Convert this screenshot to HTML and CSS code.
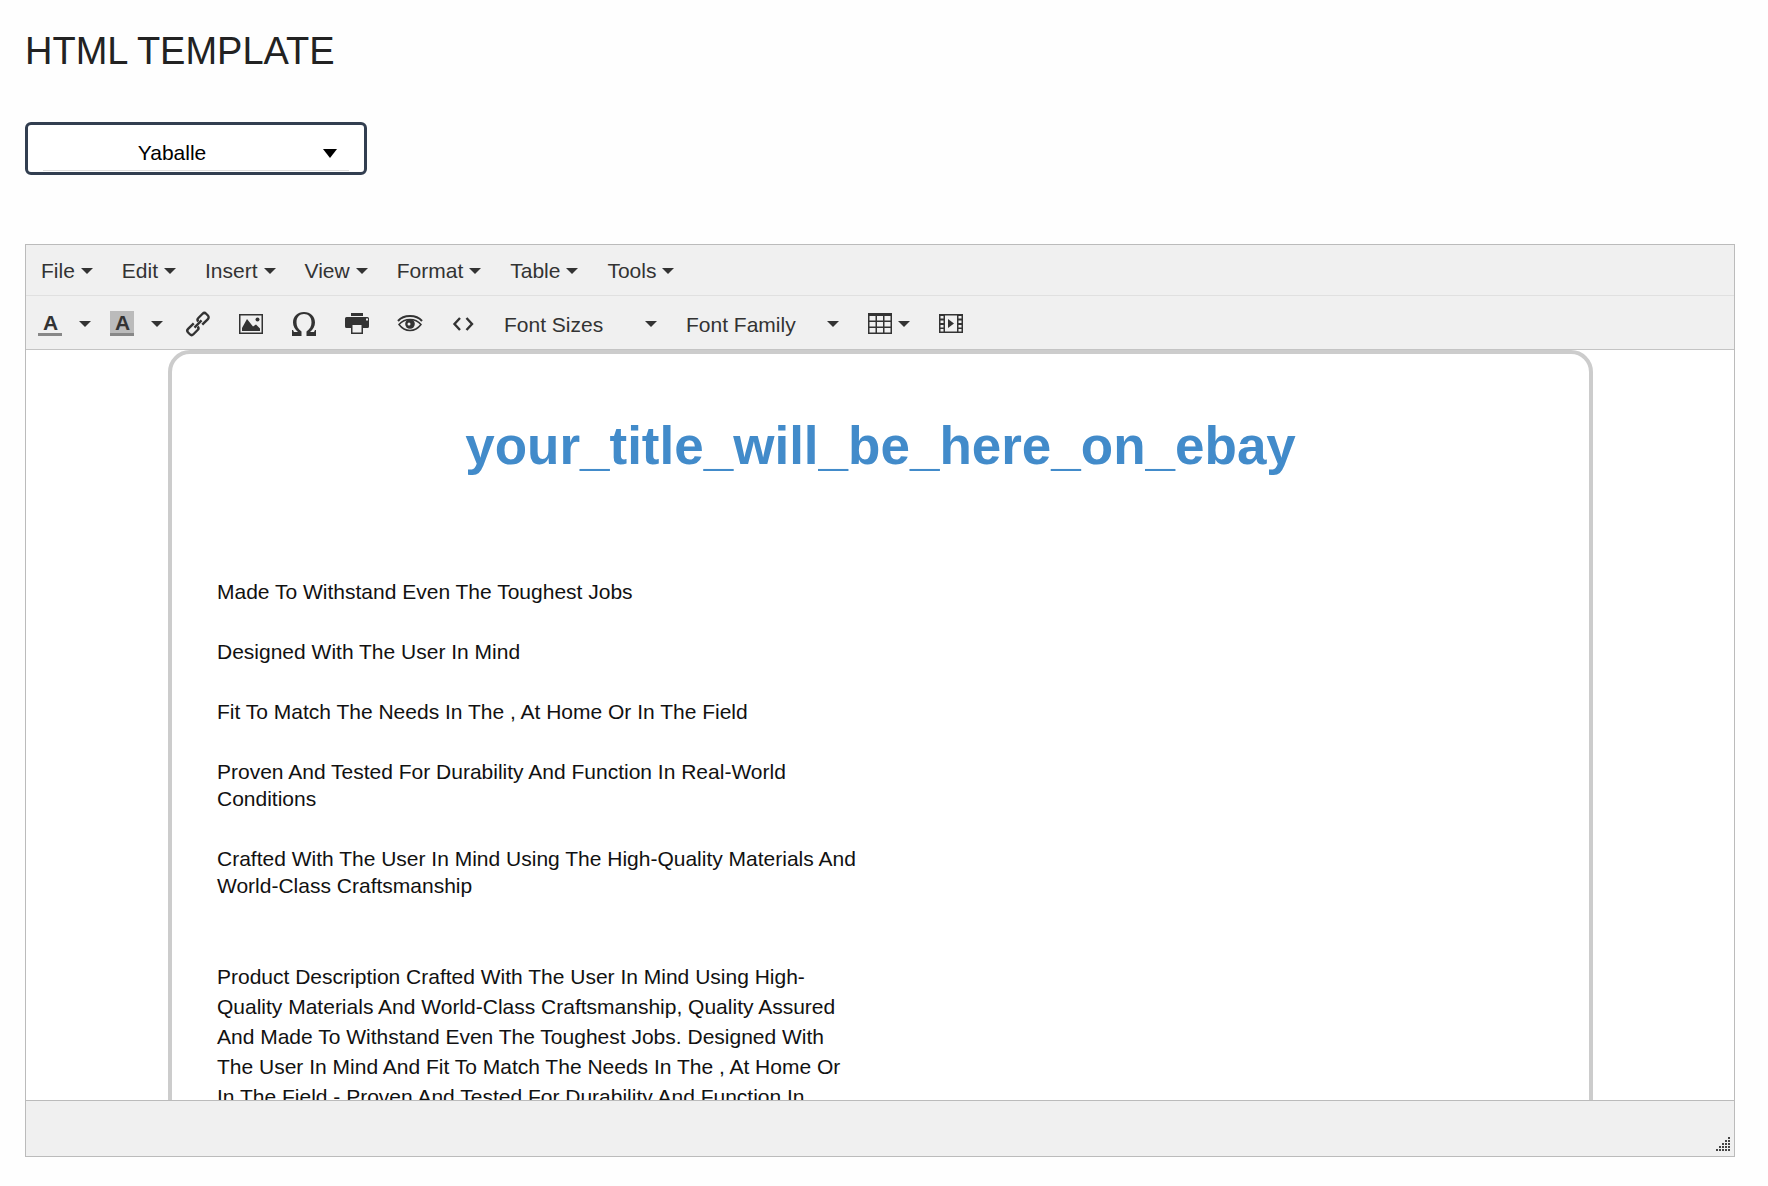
FILE: index.html
```html
<!DOCTYPE html>
<html lang="en">
<head>
  <meta charset="UTF-8">
  <meta name="viewport" content="width=device-width, initial-scale=1.0">
  <title>HTML Template</title>
  <link rel="stylesheet" href="styles.css">
</head>
<body>

  <h1 class="page-title">HTML TEMPLATE</h1>

  <div class="template-picker">
    <select class="template-select" aria-label="Template">
      <option>Yaballe</option>
    </select>
    <svg class="picker-caret" viewBox="0 0 14 9"><path d="M0 0h14L7 9z"/></svg>
  </div>

  <div class="editor">
    <div class="menubar">
      <button type="button" class="menu-btn">File <i class="caret"></i></button>
      <button type="button" class="menu-btn">Edit <i class="caret"></i></button>
      <button type="button" class="menu-btn">Insert <i class="caret"></i></button>
      <button type="button" class="menu-btn">View <i class="caret"></i></button>
      <button type="button" class="menu-btn">Format <i class="caret"></i></button>
      <button type="button" class="menu-btn">Table <i class="caret"></i></button>
      <button type="button" class="menu-btn">Tools <i class="caret"></i></button>
    </div>

    <div class="toolbar">
      <div class="split">
        <button type="button" class="color-btn" title="Text color">A</button>
        <button type="button" class="open-btn" aria-label="Choose text color"><i class="caret"></i></button>
      </div>
      <div class="split">
        <button type="button" class="color-btn back-color" title="Background color">A</button>
        <button type="button" class="open-btn" aria-label="Choose background color"><i class="caret"></i></button>
      </div>
      <button type="button" class="tool-btn" title="Insert link">
        <svg class="icon" viewBox="0 0 24 24" fill="none" stroke="#333" stroke-width="2.400">
          <g transform="rotate(-45 12 12)">
            <path d="M9.500 8.500H1.500a2.500 2.500 0 0 0-2.500 2.500v2.500a2.500 2.500 0 0 0 2.500 2.500H7.500a2.500 2.500 0 0 0 2.500-2.500"/>
            <path d="M14.500 15.500h8a2.500 2.500 0 0 0 2.500-2.500v-2.500a2.500 2.500 0 0 0-2.500-2.500H16.500a2.500 2.500 0 0 0-2.500 2.500"/>
            <path d="M7 12h10"/>
          </g>
        </svg>
      </button>
      <button type="button" class="tool-btn" title="Insert image">
        <svg class="icon" viewBox="0 0 24 24" fill="#333">
          <path d="M0 2h24v20H0zM1.500 3.500v17h21v-17z" fill-rule="evenodd"/>
          <path d="M3 19v-3l5-9 6 7.500 3-2 4 4v2.500z"/>
          <circle cx="18.500" cy="7.500" r="2"/>
        </svg>
      </button>
      <button type="button" class="tool-btn" title="Special character">
        <svg class="icon" viewBox="0 0 24 24" fill="#333">
          <path d="M12 0C5.500 0 1 4.500 1 10.500c0 4 2 7 5 9.500H2l-1-2H0v6h9.500v-4.500C6 17 4.500 14 4.500 10.500 4.500 5 7.500 2 12 2s7.500 3 7.500 8.500c0 3.500-1.500 6.500-5 9V24H24v-6h-1l-1 2h-4c3-2.500 5-5.500 5-9.500C23 4.500 18.500 0 12 0z"/>
        </svg>
      </button>
      <button type="button" class="tool-btn" title="Print">
        <svg class="icon" viewBox="0 0 24 24" fill="#333">
          <path d="M6 1h12v3H6z"/>
          <path d="M1.500 5h21A1.500 1.500 0 0 1 24 6.500v8a1.500 1.500 0 0 1-1.500 1.500H18v6H6v-6H1.500A1.500 1.500 0 0 1 0 14.500v-8A1.500 1.500 0 0 1 1.500 5zM7.500 13v7.500h9V13zM21 6.500v2h2v-2z" fill-rule="evenodd"/>
        </svg>
      </button>
      <button type="button" class="tool-btn" title="Preview">
        <svg class="icon" viewBox="0 0 24 24" fill="none" stroke="#333">
          <path d="M0 9C3 5.500 7 4 12 4s9 1.500 12 5" stroke-width="2"/>
          <path d="M1 12.500C4 9 7.500 7.500 12 7.500s8 1.500 11 5c-3 4-6.500 6-11 6s-8-2-11-6z" stroke-width="1.500"/>
          <circle cx="12" cy="12" r="4.800" fill="#333" stroke="none"/>
          <circle cx="11" cy="12" r="1.500" fill="#f0f0f0" stroke="none"/>
        </svg>
      </button>
      <button type="button" class="tool-btn" title="Source code">
        <svg class="icon" viewBox="0 0 24 24" fill="none" stroke="#333" stroke-width="2.400">
          <path d="M9 6L3.500 12 9 18M15.500 6l5.500 6-5.500 6"/>
        </svg>
      </button>
      <div class="list-box">
        <select class="list-select" aria-label="Font Sizes"><option>Font Sizes</option></select>
        <i class="caret"></i>
      </div>
      <div class="list-box">
        <select class="list-select" aria-label="Font Family"><option>Font Family</option></select>
        <i class="caret"></i>
      </div>
      <button type="button" class="tool-btn" title="Table">
        <svg class="icon" viewBox="0 0 24 24" fill="#333">
          <path d="M0 1h24v21H0zM1.500 4v4.500h6V4zM9 4v4.500h6V4zM16.500 4v4.500h6V4zM1.500 10v4.500h6V10zM9 10v4.500h6V10zM16.500 10v4.500h6V10zM1.500 16v4.500h6V16zM9 16v4.500h6V16zM16.500 16v4.500h6V16z" fill-rule="evenodd"/>
        </svg>
        <i class="caret"></i>
      </button>
      <button type="button" class="tool-btn" title="Insert video">
        <svg class="icon" viewBox="0 0 24 24" fill="#333">
          <path d="M0 2h24v19H0zM6 3.500v16h12v-16zM1.500 4v2.500h3v-2.500zM1.500 8.500V11h3V8.500zM1.500 13v2.500h3V13zM1.500 17v2.500h3V17zM19.500 4v2.500h3v-2.500zM19.500 8.500V11h3V8.500zM19.500 13v2.500h3V13zM19.500 17v2.500h3V17z" fill-rule="evenodd"/>
          <path d="M9 7v9l6-4.500z"/>
        </svg>
      </button>
    </div>

    <div class="edit-area">
      <div class="listing">
        <h2 class="listing-title">your_title_will_be_here_on_ebay</h2>
        <div class="listing-text">
          <p>Made To Withstand Even The Toughest Jobs</p>
          <p>Designed With The User In Mind</p>
          <p>Fit To Match The Needs In The , At Home Or In The Field</p>
          <p>Proven And Tested For Durability And Function In Real-World Conditions</p>
          <p>Crafted With The User In Mind Using The High-Quality Materials And World-Class Craftsmanship</p>
          <p class="description">Product Description Crafted With The User In Mind Using High-Quality Materials And World-Class Craftsmanship, Quality Assured And Made To Withstand Even The Toughest Jobs. Designed With The User In Mind And Fit To Match The Needs In The , At Home Or In The Field - Proven And Tested For Durability And Function In</p>
        </div>
      </div>
    </div>

    <div class="statusbar">
      <svg class="resize-handle" viewBox="0 0 14 14" fill="#444">
        <path d="M12 0h2v2h-2zM9 3h2v2H9zM12 3h2v2h-2zM6 6h2v2H6zM9 6h2v2H9zM12 6h2v2h-2zM3 9h2v2H3zM6 9h2v2H6zM9 9h2v2H9zM12 9h2v2h-2zM0 12h2v2H0zM3 12h2v2H3zM6 12h2v2H6zM9 12h2v2H9zM12 12h2v2h-2z"/>
      </svg>
    </div>
  </div>

</body>
</html>
```
FILE: styles.css
```css
* {
  box-sizing: border-box;
}

body {
  margin: 0;
  padding: 29px 33px 28px 25px;
  background: #fefefe;
  color: #111;
  font-family: "Liberation Sans", Arial, sans-serif;
  font-size: 21px;
}

button, select {
  margin: 0;
  padding: 0;
  border: none;
  background: none;
  color: #333;
  font-family: inherit;
  font-size: 21px;
  cursor: pointer;
}

select {
  appearance: none;
}

.page-title {
  margin: 0 0 49px;
  color: #222;
  font-size: 38px;
  font-weight: normal;
  line-height: 44px;
}

/* template drop-down */
.template-picker {
  position: relative;
  width: 342px;
  height: 53px;
  margin-bottom: 69px;
  padding: 0 15px;
  border: 3px solid #323e50;
  border-radius: 6px;
  background: #fff;
}

.template-select {
  width: 100%;
  height: 46px;
  padding: 9px 48px 0 0;
  border-bottom: 1px solid #ddd;
  color: #000;
  text-align: center;
  text-align-last: center;
}

.picker-caret {
  position: absolute;
  top: 24px;
  right: 27px;
  width: 14px;
  height: 9px;
  pointer-events: none;
}

/* editor */
.editor {
  border: 1px solid #bbb;
  background: #fff;
}

.caret {
  flex: none;
  border: 6px solid transparent;
  border-top-color: #333;
  border-bottom: none;
}

.menubar {
  display: flex;
  height: 51px;
  padding-top: 2px;
  border-bottom: 1px solid #e0e0e0;
  background: #f0f0f0;
}

.menu-btn {
  display: flex;
  align-items: center;
  gap: 6px;
  padding: 0 14px 0 15px;
}

.toolbar {
  display: flex;
  align-items: center;
  height: 54px;
  padding: 2px 0 0 1px;
  border-bottom: 1px solid #c4c4c4;
  background: #f0f0f0;
}

.split {
  display: flex;
  align-items: center;
  gap: 17px;
  padding: 0 8px 0 11px;
}

.color-btn {
  width: 24px;
  height: 25px;
  padding-left: 1px;
  border-bottom: 3px solid #888;
  font-weight: bold;
  line-height: 24px;
}

.back-color {
  background: #bbb;
}

.open-btn,
.tool-btn {
  display: flex;
  align-items: center;
  gap: 6px;
}

.tool-btn {
  padding: 0 14px 0 15px;
}

.icon {
  width: 24px;
  height: 24px;
  overflow: visible;
}

.list-box {
  display: flex;
  align-items: center;
  padding: 0 14px 0 15px;
}

.list-select {
  width: 153px;
  margin-right: -12px;
  padding-top: 2px;
}

.list-box .caret {
  pointer-events: none;
}

.edit-area {
  height: 750px;
  padding: 0 141px 0 142px;
  overflow: hidden;
}

.listing {
  padding: 60px 45px;
  border: 4px solid #ccc;
  border-radius: 22px;
}

.listing-title {
  margin: 0 0 100px;
  color: #428bca;
  font-size: 53px;
  line-height: 64px;
  text-align: center;
}

.listing-text {
  width: 49%;
}

.listing-text p {
  margin: 0 0 33px;
  line-height: 27px;
}

.listing-text .description {
  margin-top: 63px;
  padding-right: 10px;
  line-height: 30px;
}

.statusbar {
  display: flex;
  align-items: flex-end;
  justify-content: flex-end;
  height: 56px;
  padding: 5px 4px;
  border-top: 1px solid #bbb;
  background: #f0f0f0;
}

.resize-handle {
  width: 14px;
  height: 14px;
  cursor: se-resize;
}
```
